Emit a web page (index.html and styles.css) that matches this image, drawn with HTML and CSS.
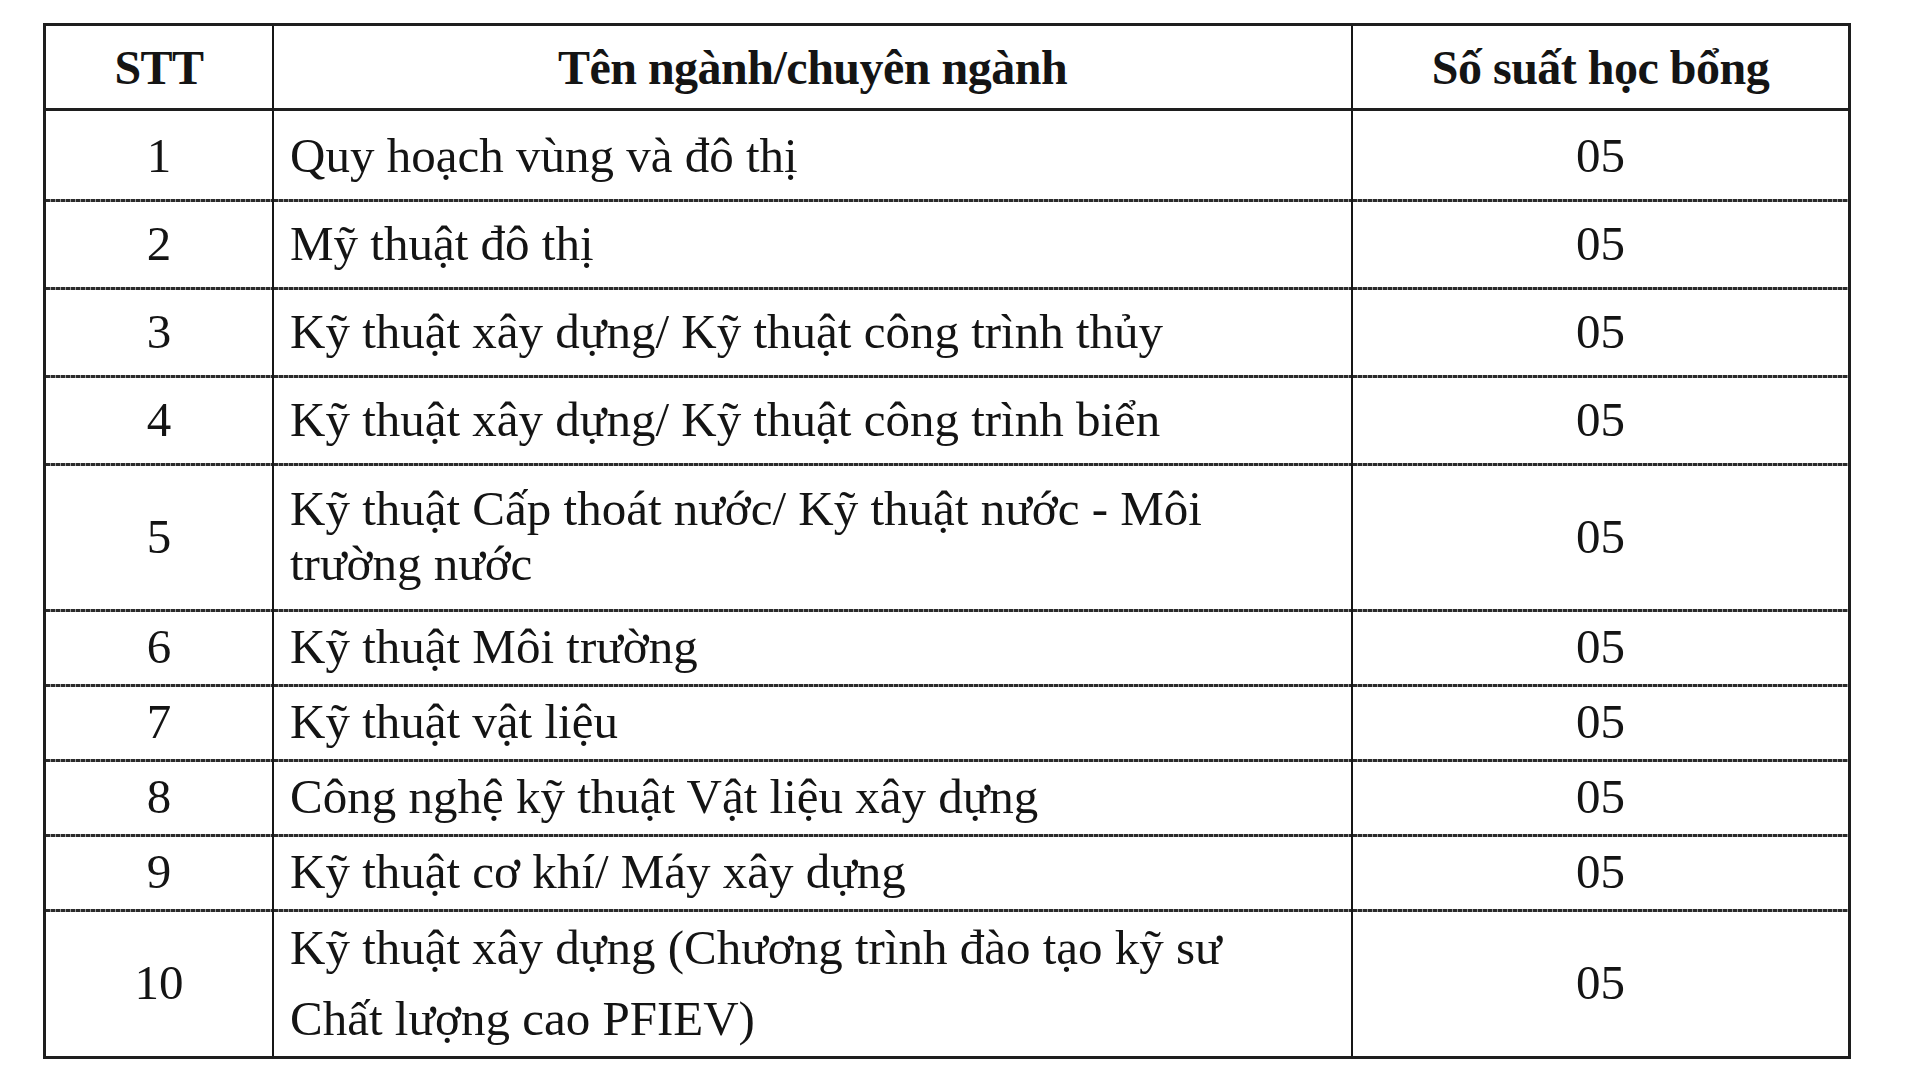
FILE: index.html
```html
<!DOCTYPE html>
<html lang="vi">
<head>
<meta charset="utf-8">
<title>Số suất học bổng</title>
<link rel="stylesheet" href="styles.css">
</head>
<body>
<main class="page">
  <table class="grid">
    <colgroup>
      <col class="c-stt">
      <col class="c-name">
      <col class="c-num">
    </colgroup>
    <thead>
      <tr class="row-head">
        <th>STT</th>
        <th>Tên ngành/chuyên ngành</th>
        <th>Số suất học bổng</th>
      </tr>
    </thead>
    <tbody>
      <tr class="row-lg first">
        <td class="stt">1</td>
        <td class="name">Quy hoạch vùng và đô thị</td>
        <td class="num">05</td>
      </tr>
      <tr class="row-lg">
        <td class="stt">2</td>
        <td class="name">Mỹ thuật đô thị</td>
        <td class="num">05</td>
      </tr>
      <tr class="row-lg">
        <td class="stt">3</td>
        <td class="name">Kỹ thuật xây dựng/ Kỹ thuật công trình thủy</td>
        <td class="num">05</td>
      </tr>
      <tr class="row-lg">
        <td class="stt">4</td>
        <td class="name">Kỹ thuật xây dựng/ Kỹ thuật công trình biển</td>
        <td class="num">05</td>
      </tr>
      <tr class="row-5">
        <td class="stt">5</td>
        <td class="name">Kỹ thuật Cấp thoát nước/ Kỹ thuật nước - Môi<br>trường nước</td>
        <td class="num">05</td>
      </tr>
      <tr class="row-sm">
        <td class="stt">6</td>
        <td class="name">Kỹ thuật Môi trường</td>
        <td class="num">05</td>
      </tr>
      <tr class="row-sm">
        <td class="stt">7</td>
        <td class="name">Kỹ thuật vật liệu</td>
        <td class="num">05</td>
      </tr>
      <tr class="row-sm">
        <td class="stt">8</td>
        <td class="name">Công nghệ kỹ thuật Vật liệu xây dựng</td>
        <td class="num">05</td>
      </tr>
      <tr class="row-sm">
        <td class="stt">9</td>
        <td class="name">Kỹ thuật cơ khí/ Máy xây dựng</td>
        <td class="num">05</td>
      </tr>
      <tr class="row-10">
        <td class="stt">10</td>
        <td class="name">Kỹ thuật xây dựng (Chương trình đào tạo kỹ sư<br>Chất lượng cao PFIEV)</td>
        <td class="num">05</td>
      </tr>
    </tbody>
  </table>
</main>
</body>
</html>
```

FILE: styles.css
```css
html, body {
  margin: 0;
  padding: 0;
  background: #ffffff;
}

.page {
  padding: 23px 0 0 43px;
}

.grid {
  width: 1808px;
  border-collapse: separate;
  border-spacing: 0;
  table-layout: fixed;
  border: 3px solid #1e1e1e;
  font-family: "Liberation Serif", "Times New Roman", serif;
  font-size: 49px;
  color: #141414;
}

.c-stt { width: 226px; }
.c-name { width: 1079px; }
.c-num { width: auto; }

th, td {
  padding: 0;
  vertical-align: middle;
  line-height: 55px;
}

th + th,
td + td {
  border-left: 2px solid #161616;
}

.row-head { height: 85px; }

.row-head th {
  font-size: 48px;
  font-weight: bold;
  text-align: center;
  border-bottom: 3px solid #1e1e1e;
  letter-spacing: -0.5px;
}

tbody tr td {
  background-image: repeating-linear-gradient(90deg, #2b2b2b 0 4px, #9a9a9a 4px 5px);
  background-size: 100% 3px;
  background-repeat: no-repeat;
  background-position: left top;
}

tbody tr.first td {
  background-image: none;
}

.row-lg { height: 88px; }
.row-sm { height: 75px; }
.row-5 { height: 146px; }
.row-10 { height: 147px; }

.row-10 .name { line-height: 71px; }

.stt,
.num {
  text-align: center;
}

.name {
  text-align: left;
  padding-left: 16px;
}
```
